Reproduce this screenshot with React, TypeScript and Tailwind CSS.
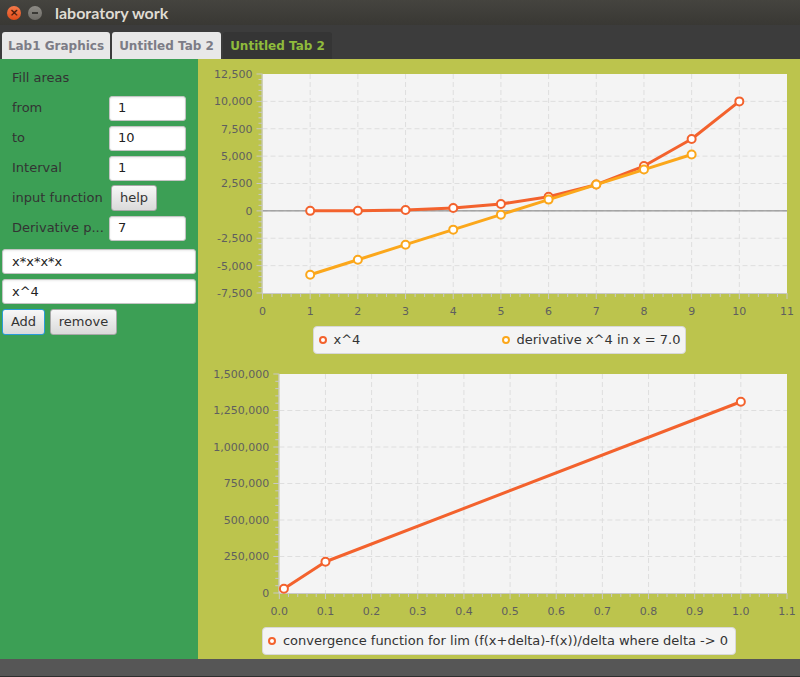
import React from "react"

type Series = { color: string; points: [number, number][] }

type ChartProps = {
  height: number
  left: number
  top: number
  xMax: number
  xStep: number
  yMin: number
  yMax: number
  yStep: number
  xFmt: (v: number) => string
  series: Series[]
  zero?: boolean
}

const PLOT_RIGHT = 589
const PLOT_H = 219

function LineChart({ height, left, top, xMax, xStep, yMin, yMax, yStep, xFmt, series, zero }: ChartProps) {
  const plotW = PLOT_RIGHT - left
  const bottom = top + PLOT_H
  const sx = (v: number) => left + (v / xMax) * plotW
  const sy = (v: number) => top + ((yMax - v) / (yMax - yMin)) * PLOT_H
  const nx = Math.round(xMax / xStep)
  const ny = Math.round((yMax - yMin) / yStep)
  const xs = Array.from({ length: nx + 1 }, (_, i) => i)
  const ys = Array.from({ length: ny + 1 }, (_, i) => i)
  const minor = [1, 2, 3, 4]

  return (
    <svg width={602} height={height} className="block shrink-0">
      <rect x={left} y={top} width={plotW} height={PLOT_H} fill="#f4f4f4" />
      {/* grid */}
      {xs.slice(1, -1).map((i) => (
        <line key={"gx" + i} x1={sx(i * xStep)} x2={sx(i * xStep)} y1={top} y2={bottom} stroke="#dedede" strokeDasharray="5 3" />
      ))}
      {ys.slice(1, -1).map((i) => (
        <line key={"gy" + i} x1={left} x2={PLOT_RIGHT} y1={sy(yMin + i * yStep)} y2={sy(yMin + i * yStep)} stroke="#dedede" strokeDasharray="5 3" />
      ))}
      {zero && <line x1={left} x2={PLOT_RIGHT} y1={sy(0)} y2={sy(0)} stroke="#7a7a7a" strokeWidth={1} />}

      {/* y axis */}
      <line x1={left - 0.5} x2={left - 0.5} y1={top} y2={bottom} stroke="#c8c8c8" />
      {ys.map((i) => {
        const y = sy(yMin + i * yStep)
        return (
          <g key={"yt" + i}>
            <line x1={left - 6} x2={left} y1={y} y2={y} stroke="#c8c8c8" />
            {i < ny &&
              minor.map((m) => {
                const yy = y - (m * PLOT_H) / ny / 5
                return <line key={m} x1={left - 4} x2={left} y1={yy} y2={yy} stroke="#c8c8c8" />
              })}
            <text x={left - 10} y={y} dy="0.36em" textAnchor="end" fontSize={11} fill="#5f5f5f">
              {(yMin + i * yStep).toLocaleString("en-US")}
            </text>
          </g>
        )
      })}

      {/* x axis */}
      <line x1={left} x2={PLOT_RIGHT} y1={bottom + 0.5} y2={bottom + 0.5} stroke="#c8c8c8" />
      {xs.map((i) => {
        const x = sx(i * xStep)
        return (
          <g key={"xt" + i}>
            <line x1={x} x2={x} y1={bottom} y2={bottom + 6} stroke="#c8c8c8" />
            {i < nx &&
              minor.map((m) => {
                const xx = x + (m * plotW) / nx / 5
                return <line key={m} x1={xx} x2={xx} y1={bottom} y2={bottom + 4} stroke="#c8c8c8" />
              })}
            <text x={x} y={bottom + 22} textAnchor="middle" fontSize={11} fill="#5f5f5f">
              {xFmt(i * xStep)}
            </text>
          </g>
        )
      })}

      {/* data */}
      {series.map((s, si) => (
        <g key={si}>
          <polyline
            points={s.points.map(([x, y]) => `${sx(x)},${sy(y)}`).join(" ")}
            fill="none"
            stroke={s.color}
            strokeWidth={3}
            strokeLinejoin="round"
          />
          {s.points.map(([x, y], pi) => (
            <circle key={pi} cx={sx(x)} cy={sy(y)} r={4} fill="#ffffff" stroke={s.color} strokeWidth={2} />
          ))}
        </g>
      ))}
    </svg>
  )
}

function Field({ value, className }: { value: string; className: string }) {
  return (
    <div
      className={`h-[25px] bg-white border border-[#c4c4c4] rounded-[3px] flex items-center pl-[8px] text-[13px] text-[#222] shadow-[inset_0_1px_2px_rgba(0,0,0,0.08)] ${className}`}
    >
      {value}
    </div>
  )
}

function Btn({ label, className }: { label: string; className: string }) {
  return (
    <div
      className={`h-[26px] flex items-center justify-center rounded-[3px] border bg-linear-to-b from-[#f7f7f7] to-[#dadada] text-[13px] text-[#333] ${className}`}
    >
      {label}
    </div>
  )
}

function Row({ label, children }: { label: string; children?: React.ReactNode }) {
  return (
    <div className="h-[30px] flex items-center pl-[12px]">
      <div className="w-[97px] shrink-0 text-[13px] text-[#333] whitespace-nowrap overflow-hidden">{label}</div>
      {children}
    </div>
  )
}

function LegendItem({ color, label, className }: { color: string; label: string; className: string }) {
  return (
    <div className={`flex items-center gap-[7px] ${className}`}>
      <span className="w-[8px] h-[8px] rounded-full border-2 bg-white" style={{ borderColor: color }} />
      <span className="text-[13px] text-[#333] whitespace-nowrap">{label}</span>
    </div>
  )
}

const ORANGE = "#f3622d"
const YELLOW = "#fba71b"

const quartic = Array.from({ length: 10 }, (_, i) => [i + 1, (i + 1) ** 4] as [number, number])
const tangent = Array.from({ length: 9 }, (_, i) => [i + 1, 2401 + 1372 * (i + 1 - 7)] as [number, number])
const convergence: [number, number][] = [
  [0.01, 29500],
  [0.1, 214000],
  [1.0, 1310000],
]

export default function App() {
  return (
    <div className="w-[800px] h-[677px] flex flex-col overflow-hidden font-['DejaVu_Sans',sans-serif] bg-[#3b3b3b]">
      {/* title bar */}
      <div className="h-[25px] shrink-0 flex items-center bg-linear-to-b from-[#45443f] to-[#393834]">
        <div className="ml-[7px] w-[14px] h-[14px] rounded-full bg-linear-to-b from-[#f47a4a] to-[#df4b16] flex items-center justify-center text-[11px] leading-none text-[#4a1a08] font-bold">
          ×
        </div>
        <div className="ml-[7px] w-[14px] h-[14px] rounded-full bg-linear-to-b from-[#8e8c86] to-[#6d6b66] flex items-center justify-center">
          <span className="w-[6px] h-[2px] bg-[#3a3935]" />
        </div>
        <div className="ml-[13px] text-[16px] font-bold text-[#dfdbd2] font-['Lato',sans-serif]">laboratory work</div>
      </div>

      {/* tabs */}
      <div className="h-[34px] shrink-0 flex items-end pl-[2px] gap-[2px] bg-[#3c3c3c]">
        <div className="h-[27px] w-[108px] rounded-t-[3px] bg-[#e8e8e8] flex items-center justify-center text-[12px] font-bold text-[#7c7c86]">
          Lab1 Graphics
        </div>
        <div className="h-[27px] w-[109px] rounded-t-[3px] bg-[#e8e8e8] flex items-center justify-center text-[12px] font-bold text-[#7c7c86]">
          Untitled Tab 2
        </div>
        <div className="h-[27px] w-[109px] rounded-t-[3px] bg-[#353535] flex items-center justify-center text-[12px] font-bold text-[#8fbb3c]">
          Untitled Tab 2
        </div>
      </div>

      {/* content */}
      <div className="h-[600px] shrink-0 flex">
        <div className="w-[198px] shrink-0 bg-[#3c9f55] flex flex-col pt-[4px]">
          <Row label="Fill areas" />
          <Row label="from">
            <Field value="1" className="w-[77px]" />
          </Row>
          <Row label="to">
            <Field value="10" className="w-[77px]" />
          </Row>
          <Row label="Interval">
            <Field value="1" className="w-[77px]" />
          </Row>
          <Row label="input function">
            <Btn label="help" className="ml-[2px] w-[46px] border-[#a8a8a8]" />
          </Row>
          <Row label="Derivative p...">
            <Field value="7" className="w-[77px]" />
          </Row>
          <Field value="x*x*x*x" className="mt-[6px] ml-[2px] w-[194px] pl-[9px]" />
          <Field value="x^4" className="mt-[5px] ml-[2px] w-[194px] pl-[9px]" />
          <div className="mt-[5px] ml-[2px] flex gap-[5px]">
            <Btn label="Add" className="w-[43px] border-[#2a9bd8]" />
            <Btn label="remove" className="w-[67px] border-[#a8a8a8]" />
          </div>
        </div>

        <div className="flex-1 bg-[#bcc44d] flex flex-col items-center">
          <LineChart
            height={261}
            left={64.5}
            top={15}
            xMax={11}
            xStep={1}
            yMin={-7500}
            yMax={12500}
            yStep={2500}
            xFmt={(v) => String(Math.round(v))}
            series={[
              { color: ORANGE, points: quartic },
              { color: YELLOW, points: tangent },
            ]}
            zero
          />
          <div className="mt-[6px] h-[28px] w-[373px] rounded-[4px] bg-[#f4f4f4] border border-[#d8d8d8] flex items-center pl-[5px]">
            <LegendItem color={ORANGE} label="x^4" className="w-[183px]" />
            <LegendItem color={YELLOW} label="derivative x^4 in x = 7.0" className="" />
          </div>
          <div className="mt-[6px]">
            <LineChart
              height={260}
              left={81.3}
              top={14}
              xMax={1.1}
              xStep={0.1}
              yMin={0}
              yMax={1500000}
              yStep={250000}
              xFmt={(v) => v.toFixed(1)}
              series={[{ color: ORANGE, points: convergence }]}
            />
          </div>
          <div className="mt-[7px] h-[28px] rounded-[4px] bg-[#f4f4f4] border border-[#d8d8d8] flex items-center pl-[5px] pr-[7px]">
            <LegendItem color={ORANGE} label="convergence function for lim (f(x+delta)-f(x))/delta where delta -> 0" className="" />
          </div>
        </div>
      </div>

      {/* status bar */}
      <div className="flex-1 bg-[#565656] border-b border-[#2e2e2e]" />
    </div>
  )
}
